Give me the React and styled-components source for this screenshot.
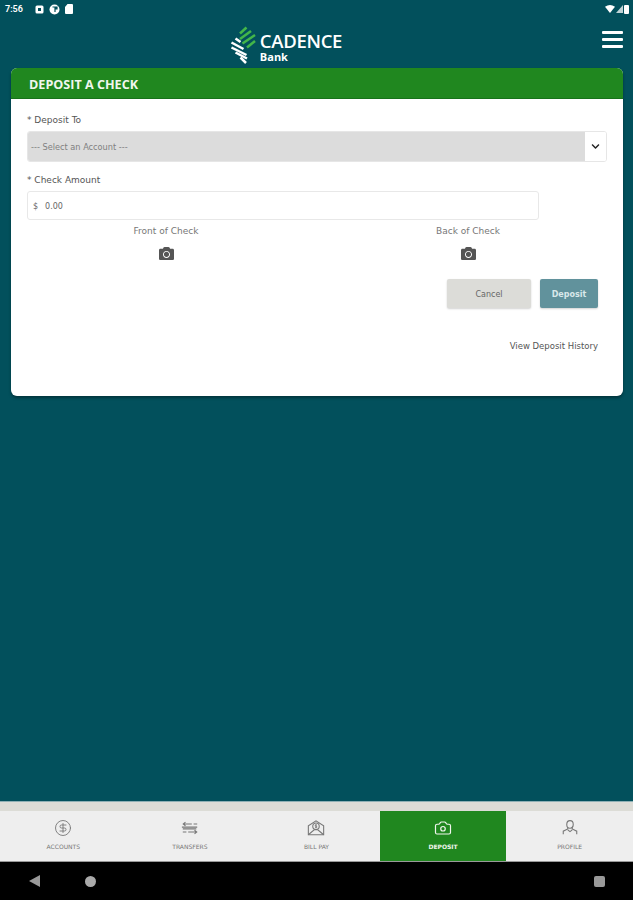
import React from 'react'
import styled, { createGlobalStyle } from 'styled-components'
import { FaCamera, FaChevronDown } from 'react-icons/fa'
import { CircleDollarSign, Camera } from 'lucide-react'

const GlobalStyle = createGlobalStyle`
  html, body { margin: 0; padding: 0; background: #02505c; }
  * { box-sizing: border-box; }
  body { font-family: "DejaVu Sans", sans-serif; }
`

const Page = styled.div`
  width: 633px;
  height: 900px;
  display: flex;
  flex-direction: column;
  background: #02505c;
  overflow: hidden;
`

const StatusBar = styled.div`
  height: 18px;
  flex: none;
  display: flex;
  align-items: center;
  justify-content: space-between;
  padding: 0 4px 0 5px;
  color: #fff;
`

const StatusGroup = styled.div`
  display: flex;
  align-items: center;
  gap: ${p => p.$gap || 0}px;
`

const Clock = styled.span`
  font: 600 9px "Roboto", sans-serif;
  margin-right: 7px;
`

const Header = styled.header`
  height: 50px;
  flex: none;
  position: relative;
  display: flex;
  justify-content: center;
  padding: 8px 0 0 0;
`

const Brand = styled.div`
  display: flex;
  align-items: flex-start;
  gap: 2px;
  margin-left: -61px;
  height: 40px;
`

const BrandText = styled.div`
  display: flex;
  flex-direction: column;
  color: #fff;
  padding-top: 5px;
`

const BrandName = styled.span`
  font: 600 18.5px/20px "Open Sans", sans-serif;
  letter-spacing: -0.3px;
`

const BrandSub = styled.span`
  font: 700 11px/11px "Open Sans", sans-serif;
`

const Burger = styled.button`
  position: absolute;
  right: 10px;
  top: 13px;
  width: 21px;
  height: 17px;
  padding: 0;
  border: 0;
  background: none;
  display: flex;
  flex-direction: column;
  justify-content: space-between;
  span {
    height: 3px;
    background: #fff;
    border-radius: 1px;
  }
`

const Main = styled.main`
  flex: 1;
  padding: 0 10px 0 11px;
`

const Card = styled.section`
  height: 328px;
  background: #fff;
  border-radius: 6px;
  overflow: hidden;
  box-shadow: 0 2px 3px rgba(0, 0, 0, 0.35);
`

const CardTitle = styled.h1`
  margin: 0;
  height: 31px;
  padding: 3px 0 0 18px;
  display: flex;
  align-items: center;
  background: #20871f;
  border-bottom: 1px solid #17721a;
  color: #f1f6ee;
  font: 700 12.6px "Open Sans", sans-serif;
`

const CardBody = styled.div`
  padding: 15px 16px 0;
`

const Label = styled.label`
  display: block;
  font-size: 9px;
  line-height: 12px;
  color: #555;
  margin-bottom: ${p => p.$gap}px;
`

const SelectBox = styled.div`
  height: 31px;
  display: flex;
  border: 1px solid #e6e6e6;
  border-radius: 3px;
  overflow: hidden;
  margin-bottom: 12px;
`

const SelectValue = styled.div`
  flex: 1;
  display: flex;
  align-items: center;
  padding-left: 3px;
  background: #dcdcdc;
  font-size: 8.2px;
  color: #808080;
`

const SelectArrow = styled.div`
  width: 21px;
  display: flex;
  align-items: center;
  justify-content: center;
  background: #fff;
  color: #222;
`

const AmountBox = styled.div`
  width: 512px;
  height: 29px;
  display: flex;
  align-items: center;
  gap: 7px;
  padding: 1px 0 0 5px;
  border: 1px solid #e8e8e8;
  border-radius: 3px;
  font-size: 8px;
  color: #666;
  margin-bottom: 5px;
`

const CheckSides = styled.div`
  display: flex;
  justify-content: space-between;
`

const CheckSide = styled.div`
  width: 278px;
  display: flex;
  flex-direction: column;
  align-items: center;
  gap: 9px;
  font-size: 9px;
  line-height: 12px;
  color: #777;
  svg { color: #555; }
`

const Actions = styled.div`
  display: flex;
  justify-content: flex-end;
  gap: 9px;
  margin: 18px 9px 0 0;
`

const Button = styled.button`
  width: ${p => p.$width}px;
  height: 29px;
  padding: 2px 0 0;
  border: 0;
  border-radius: 2px;
  font: ${p => (p.$primary ? 700 : 400)} 8px "DejaVu Sans", sans-serif;
  color: ${p => (p.$primary ? '#d9e8ea' : '#666')};
  background: ${p => (p.$primary ? '#61929c' : '#dcdcd8')};
  box-shadow: 0 1px 2px rgba(0, 0, 0, 0.18);
`

const HistoryLink = styled.a`
  display: block;
  margin: 32px 9px 0 0;
  text-align: right;
  font-size: 8.5px;
  line-height: 12px;
  color: #555;
`

const TabTrim = styled.div`
  height: 10px;
  flex: none;
  background: #dcdcd6;
  border-top: 1px solid #8fb0b4;
`

const TabBar = styled.nav`
  height: 51px;
  flex: none;
  display: grid;
  grid-template-columns: repeat(5, 1fr);
  background: #eeeeee;
  border-bottom: 1px solid #999;
`

const Tab = styled.div`
  display: flex;
  flex-direction: column;
  align-items: center;
  padding-top: 8px;
  gap: 6px;
  background: ${p => (p.$active ? '#20871f' : 'transparent')};
  color: ${p => (p.$active ? '#f1f6ee' : '#777')};
  font-size: 6px;
  font-weight: ${p => (p.$active ? 700 : 400)};
  line-height: 8px;
  svg { height: 18px; width: 18px; }
`

const SystemNav = styled.div`
  height: 38px;
  flex: none;
  background: #000;
  display: flex;
  align-items: center;
  padding: 0 28px 0 29px;
  gap: 45px;
`

const NavDot = styled.div`
  width: 11px;
  height: 11px;
  border-radius: 50%;
  background: #aaa;
`

const NavSquare = styled.div`
  width: 11px;
  height: 11px;
  border-radius: 2px;
  background: #999;
  margin-left: auto;
`

const Logo = () => (
  <svg width="28" height="38" viewBox="0 0 28 38">
    <g strokeWidth="2.5" fill="none">
      <g stroke="#43b649">
        <path d="M10 7.5 L16.5 1.5" />
        <path d="M10 13 L21 5" />
        <path d="M12.5 17.5 L25 9" />
        <path d="M17 21.5 L25 15" />
      </g>
      <g stroke="#fff">
        <path d="M5.5 12.5 L10.5 16" />
        <path d="M1.5 16.5 L13.5 23" />
        <path d="M1.5 21.5 L16.5 29" />
        <path d="M5.5 26.5 L17 32.5" />
        <path d="M10.5 31.5 L16 37" />
      </g>
    </g>
  </svg>
)

const StatusIconA = () => (
  <svg width="9" height="9" viewBox="0 0 9 9">
    <rect x="0.5" y="0.5" width="8" height="8" rx="1.5" fill="#fff" />
    <rect x="3" y="3" width="3" height="3" fill="#02505c" />
  </svg>
)

const StatusIconB = () => (
  <svg width="11" height="11" viewBox="0 0 11 11">
    <circle cx="5.5" cy="5.5" r="5" fill="#fff" />
    <path d="M3.5 3 h2.5 v5 M7 3 h1 v2 h-1 z" stroke="#02505c" strokeWidth="1.2" fill="none" />
  </svg>
)

const StatusIconC = () => (
  <svg width="8" height="10" viewBox="0 0 8 10">
    <path d="M2.5 0 H7 a1 1 0 0 1 1 1 V9 a1 1 0 0 1-1 1 H1 a1 1 0 0 1-1-1 V3 z" fill="#fff" />
  </svg>
)

const WifiIcon = () => (
  <svg width="10" height="8" viewBox="0 0 10 8">
    <path d="M0 1.8 Q5 -1.6 10 1.8 L5 8 z" fill="#fff" />
  </svg>
)

const SignalIcon = () => (
  <svg width="7" height="8" viewBox="0 0 7 8">
    <path d="M7 0 V8 H0 z" fill="#fff" opacity="0.75" />
  </svg>
)

const BatteryIcon = () => (
  <svg width="5" height="9" viewBox="0 0 5 9">
    <rect width="5" height="9" rx="1" fill="#fff" />
  </svg>
)

const TransfersIcon = () => (
  <svg viewBox="0 0 20 18" fill="none" stroke="currentColor" strokeWidth="1.2">
    <path d="M5 2.5 L2.5 4.5 L5 6.5 M2.5 4.5 H12 M14 4.5 H18" />
    <path d="M1 8 H18 M2 10 H17" />
    <path d="M15 11.5 L17.5 13.5 L15 15.5 M17.5 13.5 H8 M6 13.5 H2" />
  </svg>
)

const BillPayIcon = () => (
  <svg viewBox="0 0 20 18" fill="none" stroke="currentColor" strokeWidth="1.2">
    <path d="M1.5 6.5 V16.5 H18.5 V6.5 L10 1 z" />
    <path d="M1.5 16.5 L8 11 H12 L18.5 16.5" />
    <circle cx="10" cy="7" r="3.6" />
    <path d="M11 5.6 H9.2 V7 H10.8 V8.4 H9 M10 4.6 V9.4" strokeWidth="0.8" />
  </svg>
)

const ProfileIcon = () => (
  <svg viewBox="0 0 20 18" fill="none" stroke="currentColor" strokeWidth="1.2">
    <ellipse cx="10" cy="5" rx="3.6" ry="4.2" />
    <path d="M7.5 8.5 V10 L2.5 12.5 V16 M12.5 8.5 V10 L17.5 12.5 V16 M7.5 11 L10 13 L12.5 11" />
  </svg>
)

const tabs = [
  { label: 'ACCOUNTS', icon: <CircleDollarSign strokeWidth={1.2} /> },
  { label: 'TRANSFERS', icon: <TransfersIcon /> },
  { label: 'BILL PAY', icon: <BillPayIcon /> },
  { label: 'DEPOSIT', icon: <Camera strokeWidth={1.6} />, active: true },
  { label: 'PROFILE', icon: <ProfileIcon /> },
]

export default function App() {
  return (
    <Page>
      <GlobalStyle />
      <StatusBar>
        <StatusGroup $gap={5}>
          <Clock>7:56</Clock>
          <StatusIconA />
          <StatusIconB />
          <StatusIconC />
        </StatusGroup>
        <StatusGroup $gap={1}>
          <WifiIcon />
          <SignalIcon />
          <BatteryIcon />
        </StatusGroup>
      </StatusBar>
      <Header>
        <Brand>
          <Logo />
          <BrandText>
            <BrandName>CADENCE</BrandName>
            <BrandSub>Bank</BrandSub>
          </BrandText>
        </Brand>
        <Burger aria-label="Menu">
          <span />
          <span />
          <span />
        </Burger>
      </Header>
      <Main>
        <Card>
          <CardTitle>DEPOSIT A CHECK</CardTitle>
          <CardBody>
            <Label $gap={5}>* Deposit To</Label>
            <SelectBox>
              <SelectValue>--- Select an Account ---</SelectValue>
              <SelectArrow>
                <FaChevronDown size={9} />
              </SelectArrow>
            </SelectBox>
            <Label $gap={5}>* Check Amount</Label>
            <AmountBox>
              <span>$</span>
              <span>0.00</span>
            </AmountBox>
            <CheckSides>
              <CheckSide>
                Front of Check
                <FaCamera size={15} />
              </CheckSide>
              <CheckSide>
                Back of Check
                <FaCamera size={15} />
              </CheckSide>
            </CheckSides>
            <Actions>
              <Button $width={84}>Cancel</Button>
              <Button $width={58} $primary>Deposit</Button>
            </Actions>
            <HistoryLink>View Deposit History</HistoryLink>
          </CardBody>
        </Card>
      </Main>
      <TabTrim />
      <TabBar>
        {tabs.map(t => (
          <Tab key={t.label} $active={t.active}>
            {t.icon}
            {t.label}
          </Tab>
        ))}
      </TabBar>
      <SystemNav>
        <svg width="11" height="12" viewBox="0 0 11 12">
          <path d="M11 0 V12 L0 6 z" fill="#999" />
        </svg>
        <NavDot />
        <NavSquare />
      </SystemNav>
    </Page>
  )
}
